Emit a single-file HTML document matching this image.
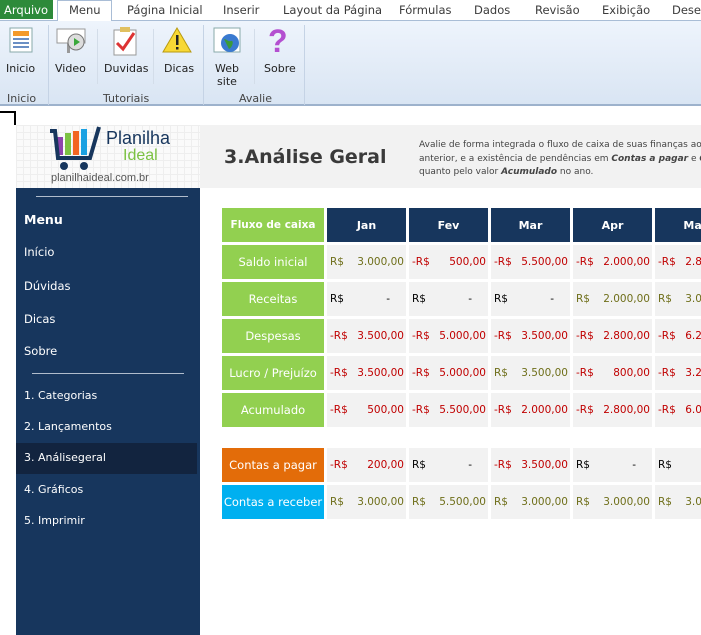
<!DOCTYPE html>
<html><head><meta charset="utf-8"><style>
*{margin:0;padding:0;box-sizing:border-box}
html{width:701px;height:635px;overflow:hidden}
body{width:701px;height:635px;overflow:hidden;background:#fff;font-family:"DejaVu Sans","Liberation Sans",sans-serif;position:relative}
.abs{position:absolute}
.tab{position:absolute;top:3px;font-size:11.5px;color:#3b3b3b;white-space:nowrap}
.ribbon{position:absolute;left:0;top:20px;width:701px;height:86px;background:linear-gradient(#eef4fc,#d9e5f3);border-top:1px solid #a9bdd6;border-bottom:2px solid #9db2cc}
.btn{position:absolute;top:47px;font-size:11px;color:#222;text-align:center;line-height:13px}
.grp{position:absolute;top:72px;font-size:11px;color:#444}
.sep{position:absolute;top:4px;width:1px;height:80px;background:#c5d3e5}
.side{position:absolute;left:16px;top:188px;width:184px;height:447px;background:#17365d}
.si{position:absolute;left:8px;color:#fff;font-size:11.5px}
.c{position:absolute;height:34px;font-size:10.5px;display:flex;align-items:center;overflow:hidden;white-space:nowrap}
.lab{background:#92d050;color:#fff;justify-content:center;font-size:11.5px;width:102px;left:222px}
.hd{background:#17365d;color:#fff;justify-content:center;font-weight:bold;font-size:11px}
.v{background:#f2f2f2;justify-content:space-between;padding:0 2px 0 3px}
.n{color:#c00000}.p{color:#6f6f1a}.k{color:#000}
</style></head><body>
<div class="abs" style="left:0;top:0;width:53px;height:19px;background:#2d8a3a;color:#fff;font-size:11.5px;padding:3px 0 0 4px">Arquivo</div>
<div class="abs" style="left:57px;top:0;width:55px;height:21px;background:#fff;border:1px solid #a9bdd6;border-bottom:none;z-index:2"></div>
<div class="tab" style="left:69px;z-index:3">Menu</div>
<div class="tab" style="left:127px">Página Inicial</div>
<div class="tab" style="left:223px">Inserir</div>
<div class="tab" style="left:283px">Layout da Página</div>
<div class="tab" style="left:399px">Fórmulas</div>
<div class="tab" style="left:474px">Dados</div>
<div class="tab" style="left:535px">Revisão</div>
<div class="tab" style="left:602px">Exibição</div>
<div class="tab" style="left:672px">Desenvolvedor</div>
<div class="ribbon">
 <svg class="abs" style="left:9px;top:6px" width="24" height="26"><rect x="1" y="1" width="22" height="24" fill="#fff" stroke="#8aa"/><rect x="4" y="4" width="16" height="5" fill="#f39a2b"/><rect x="4" y="11" width="16" height="2" fill="#6a8fc4"/><rect x="4" y="15" width="16" height="2" fill="#6a8fc4"/><rect x="4" y="19" width="16" height="2" fill="#6a8fc4"/></svg>
 <svg class="abs" style="left:55px;top:6px" width="32" height="28"><rect x="2" y="2" width="28" height="14" fill="#fff" stroke="#999"/><rect x="12" y="16" width="3" height="10" fill="#999"/><circle cx="21" cy="15" r="8" fill="#ddd" stroke="#777"/><path d="M19 11l6 4-6 4z" fill="#3aa83a"/></svg>
 <svg class="abs" style="left:112px;top:5px" width="26" height="30"><rect x="2" y="4" width="22" height="25" fill="#fff" stroke="#999"/><rect x="8" y="1" width="10" height="5" fill="#e0c060"/><path d="M5 17l6 6 11-16" stroke="#d33" stroke-width="3" fill="none"/></svg>
 <svg class="abs" style="left:162px;top:6px" width="30" height="26"><path d="M15 1L29 25H1z" fill="#f8d835" stroke="#b89a10"/><rect x="14" y="8" width="2.5" height="10" fill="#222"/><rect x="14" y="20" width="2.5" height="2.5" fill="#222"/></svg>
 <svg class="abs" style="left:213px;top:6px" width="30" height="28"><rect x="1" y="1" width="26" height="24" fill="#fff" stroke="#8aa"/><circle cx="17" cy="16" r="9" fill="#3a7ad0"/><path d="M11 12c3 0 4 3 7 2s2 6-2 8" fill="#3b9a3b"/></svg>
 <div class="abs" style="left:268px;top:2px;font-size:32px;color:#b44fd0;font-weight:bold;font-family:'Liberation Sans'">?</div>
 <div class="sep" style="left:48px"></div><div class="sep" style="left:97px;top:8px;height:55px;background:#d3dde9"></div><div class="sep" style="left:153px;top:8px;height:55px;background:#d3dde9"></div><div class="sep" style="left:203px"></div><div class="sep" style="left:254px;top:8px;height:55px;background:#d3dde9"></div><div class="sep" style="left:304px"></div>
</div>
<div class="btn" style="left:6px;top:62px">Inicio</div>
<div class="btn" style="left:55px;top:62px">Video</div>
<div class="btn" style="left:104px;top:62px">Duvidas</div>
<div class="btn" style="left:164px;top:62px">Dicas</div>
<div class="btn" style="left:215px;top:62px">Web<br>site</div>
<div class="btn" style="left:264px;top:62px">Sobre</div>
<div class="grp" style="left:7px;top:92px">Inicio</div>
<div class="grp" style="left:103px;top:92px">Tutoriais</div>
<div class="grp" style="left:239px;top:92px">Avalie</div>
<div class="abs" style="left:0;top:111px;width:16px;height:14px;border-top:2px solid #000;border-right:2px solid #000"></div>
<div class="abs" style="left:16px;top:125px;width:184px;height:63px;background:#fafafa;background-image:linear-gradient(#eee 1px,transparent 1px),linear-gradient(90deg,#eee 1px,transparent 1px);background-size:7px 7px"></div>
<svg class="abs" style="left:48px;top:124px" width="60" height="50"><rect x="9" y="13" width="6" height="18" fill="#8e44ad"/><rect x="17" y="9" width="6" height="22" fill="#7cc243"/><rect x="25" y="7" width="6" height="24" fill="#f26522"/><rect x="33" y="5" width="6" height="26" fill="#1ba1e2"/><path d="M2 7h5l3 27h32l9-31" stroke="#17365d" stroke-width="4" fill="none"/><circle cx="16" cy="42" r="4" fill="#17365d"/><circle cx="36" cy="42" r="4" fill="#17365d"/></svg>
<div class="abs" style="left:106px;top:128px;font-size:18px;color:#17365d;font-family:'Liberation Sans'">Planilha</div>
<div class="abs" style="left:123px;top:147px;font-size:16px;color:#7cc243;font-family:'Liberation Sans'">Ideal</div>
<div class="abs" style="left:51px;top:172px;font-size:11px;color:#555;font-family:'Liberation Sans'">planilhaideal.com.br</div>
<div class="abs" style="left:200px;top:125px;width:501px;height:63px;background:#f2f2f2;overflow:hidden">
 <div class="abs" style="left:24px;top:21px;font-size:19px;font-weight:bold;color:#3a3a3a">3.Análise Geral</div>
 <div class="abs" style="left:219px;top:14px;font-size:9px;color:#444;line-height:13.5px;white-space:nowrap">Avalie de forma integrada o fluxo de caixa de suas finanças ao<br>anterior, e a existência de pendências em <b><i>Contas a pagar</i></b> e <b><i>Contas</i></b><br>quanto pelo valor <b><i>Acumulado</i></b> no ano.</div>
</div>
<div class="side">
 <div class="abs" style="left:20px;top:8px;width:152px;height:1px;background:#b0bccc"></div>
 <div class="si" style="top:24px;font-weight:bold;font-size:12.5px">Menu</div>
 <div class="si" style="top:57px">Início</div>
 <div class="si" style="top:91px">Dúvidas</div>
 <div class="si" style="top:124px">Dicas</div>
 <div class="si" style="top:156px">Sobre</div>
 <div class="abs" style="left:16px;top:185px;width:152px;height:1px;background:#b0bccc"></div>
 <div class="si" style="top:201px;font-size:11px">1. Categorias</div>
 <div class="si" style="top:232px;font-size:11px">2. Lançamentos</div>
 <div class="abs" style="left:0;top:255px;width:181px;height:31px;background:#12243f"></div>
 <div class="si" style="top:263px;font-size:11px">3. Análisegeral</div>
 <div class="si" style="top:295px;font-size:11px">4. Gráficos</div>
 <div class="si" style="top:326px;font-size:11px">5. Imprimir</div>
</div>
<div id="t" style="position:absolute;left:0;top:0;width:701px;height:635px;overflow:hidden"></div>
<script>
var X=[327,409,491,573,655],W=79;
var h='<div class="c lab" style="top:208px;font-weight:bold;font-size:10.5px">Fluxo de caixa</div>';
['Jan','Fev','Mar','Apr','Mai'].forEach(function(m,i){h+='<div class="c hd" style="left:'+X[i]+'px;top:208px;width:'+W+'px">'+m+'</div>'});
var rows=[['Saldo inicial','#92d050',245,[['p','3.000,00'],['n','500,00'],['n','5.500,00'],['n','2.000,00'],['n','2.800,00']]],
['Receitas','#92d050',282,[['k','-'],['k','-'],['k','-'],['p','2.000,00'],['p','3.000,00']]],
['Despesas','#92d050',319,[['n','3.500,00'],['n','5.000,00'],['n','3.500,00'],['n','2.800,00'],['n','6.200,00']]],
['Lucro / Prejuízo','#92d050',356,[['n','3.500,00'],['n','5.000,00'],['p','3.500,00'],['n','800,00'],['n','3.200,00']]],
['Acumulado','#92d050',393,[['n','500,00'],['n','5.500,00'],['n','2.000,00'],['n','2.800,00'],['n','6.000,00']]],
['Contas a pagar','#e36c09',448,[['n','200,00'],['k','-'],['n','3.500,00'],['k','-'],['k','']]],
['Contas a receber','#00b0f0',485,[['p','3.000,00'],['p','5.500,00'],['p','3.000,00'],['p','3.000,00'],['p','3.000,00']]]];
rows.forEach(function(r){h+='<div class="c lab" style="top:'+r[2]+'px;background:'+r[1]+'">'+r[0]+'</div>';
r[3].forEach(function(v,i){var pre=v[0]=='n'?'-R$':'R$';var vv=v[1]=='-'?'<span style="padding-right:14px">-</span>':'<span>'+v[1]+'</span>';
h+='<div class="c v '+v[0]+'" style="left:'+X[i]+'px;top:'+r[2]+'px;width:'+W+'px"><span>'+pre+'</span>'+vv+'</div>'})});
document.getElementById('t').innerHTML=h;
</script>
</body></html>
